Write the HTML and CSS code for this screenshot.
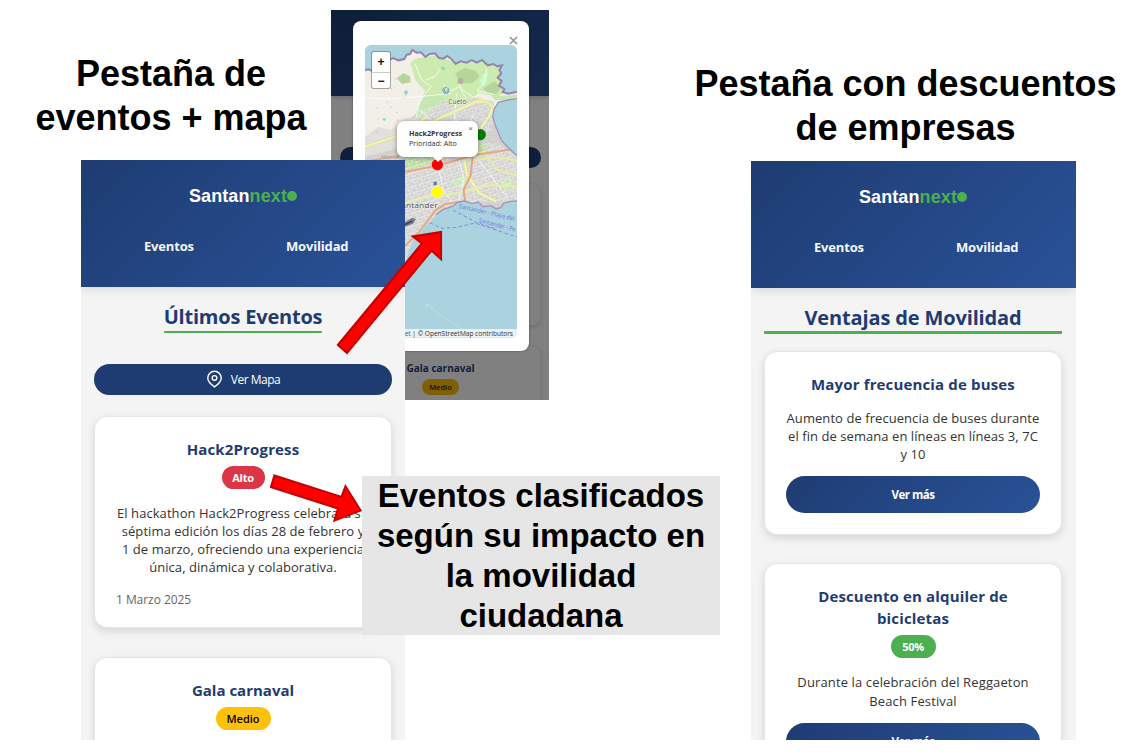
FILE: index.html
```html
<!DOCTYPE html>
<html lang="es">
<head>
<meta charset="utf-8">
<title>Santannext</title>
<link rel="stylesheet" href="styles.css">
</head>
<body>
<main class="slide">
  <h2 class="caption caption-events">Pestaña de<br>eventos + mapa</h2>
  <h2 class="caption caption-offers">Pestaña con descuentos<br>de empresas</h2>

  <section class="map-screen">
    <div class="dim-header"></div>
    <div class="dim-body">
      <div class="dim-button"></div>
      <div class="dim-card dim-card-tall"></div>
      <div class="dim-card dim-card-last">
        <h3 class="dim-title">Gala carnaval</h3>
        <span class="dim-badge">Medio</span>
      </div>
    </div>
    <div class="modal">
      <svg class="modal-close" viewBox="0 0 9 9"><path d="M1 1l7 7M8 1L1 8"/></svg>
      <svg class="map" viewBox="120 135 456 878">
        <rect x="120" y="135" width="456" height="878" fill="#aad3df"/>
        <defs>
          <clipPath id="land"><path id="coast" d="M110 211L130 208 142 213 160 196 180 185 205 174 220 181 238 177 245 164 255 162 262 150 275 158 288 157 301 171 314 162 330 160 342 174 355 176 367 168 378 176 392 191 407 184 425 188 440 180 455 188 471 180 488 196 505 192 517 199 531 196 523 210 529 220 518 233 530 243 522 257 538 267 533 276 550 281 586 273V296L548 300 520 307 508 326 503 350 512 379 521 401 530 422 544 437 560 452 586 476V603L553 605 536 610 528 623 512 626 498 617 474 620 460 606 440 611 419 603 398 607 380 620 355 628 333 643 315 665 296 680 281 701 263 725 251 750 243 782 230 815H110Z"/></clipPath>
          <pattern id="blocks" width="23" height="19" patternUnits="userSpaceOnUse" patternTransform="rotate(-17)"><path d="M0 4H23M0 13H14M5 0V19M14 4V19M20 0V12" stroke="#fff" stroke-width="2" fill="none"/><path d="M8 7h4v4h-4zM16 14h3v3h-3z" fill="#bdbbba"/></pattern>
        </defs>
        <use href="#coast" fill="#f2efe9"/>
        <g clip-path="url(#land)">
          <path d="M255 355L285 332 330 318 350 300 410 310 445 292 508 305 500 350 520 400 586 470V640L350 640 230 800H120V470L190 420Z" fill="#d3d2d1"/>
          <path d="M120 410l40-30 40 10 30-30 30-10 30 20-30 50-60 30-80 20z" fill="#e2e0dc"/>
          <path d="M265 358L285 310 300 275 340 245 370 240 402 266 380 290 350 310 315 335Z" fill="#c8e6b4"/>
          <path d="M256 190l14-14 60-10 70 24 66-4 60 14 4 46 16 32-34 10-48-8-35 22-38 20-42-35-44-8-34-40z" fill="#cdebb0"/>
          <path d="M390 220l30-17 32 10 12 16-22 20-34 2zM475 265l34-21 18 20-12 18-22 2zM215 235l20-16 20 10 2 18-26 5z" fill="#b5d69b"/>
          <path d="M463 245l14-25 12-1-5 30-10 10z" fill="#c8facc"/>
          <path d="M490 278l40 10 50-6v22l-70-4z" fill="#c8e6b4"/>
          <path d="M508 318l-5 32 14 50 28 38 34 30v-16l-20-28-26-40-14-40z" fill="#f6e3a0"/>
          <path d="M240 465l65-28 35 20-20 35-80 18zM455 430l24 2 10 22-38 8z" fill="#b9dd9c"/>
          <path d="M375 545l40-20 17 22-30 20zM520 545l35-10 15 20-32 20z" fill="#c8e6b4"/>
          <path d="M235 478l60-20 100-28 120 0 66 40v130L440 610 350 640 240 790Z" fill="url(#blocks)" opacity=".62"/>
          <path d="M285 335l45-17 20-18 60 10 35-18 65 13-10 85-80 35-145 30-48-50z" fill="url(#blocks)" opacity=".5"/>
          <g fill="none" stroke="#fff" stroke-width="2.600" opacity=".85">
            <path d="M120 293L195 297 270 291 380 280M270 190l18 48 30 22-35 47-10 48M355 255l24 18 24-13 20 35M305 240l28-12 12-22M468 275l-20 18-38-24-12-30M485 205l-5 38-24 30 52 10M283 330l38 32 55 22M395 280l-8 85"/>
            <path d="M390 350l35 84 58 74 65 86M350 400l-15 75 20 95 34 50M290 395l30 70M445 345l-50 115 22 75-15 65"/>
          </g>
          <g fill="none" stroke-linejoin="round">
            <path d="M253 414L295 382 345 354 401 329 455 304 487 306 504 320 492 350 466 385 429 434 417 475 425 522 463 579 513 604M120 440l105-35 80-55" stroke="#d3d8a1" stroke-width="10"/>
            <path d="M253 414L295 382 345 354 401 329 455 304 487 306 504 320 492 350 466 385 429 434 417 475 425 522 463 579 513 604M120 440l105-35 80-55" stroke="#f1f5b0" stroke-width="7"/>
            <path d="M455 290l40 22 22 40 20 60 40 46M430 450l50 12 34 45 64 20M340 475l55-7 42 12 80-8 62 10M240 610l70-22 86-8 100-25 80 5" stroke="#e8eda5" stroke-width="6"/>
            <path d="M120 485l115-20 95-27 100-9M240 515l90-16 115-33 136-22M443 470l-6 55-21 45 5 38M330 632l-44 60-46 46M330 632l30-20 60-8" stroke="#e8a97a" stroke-width="6"/>
            <path d="M242 440l70 2 76-15" stroke="#a8cf91" stroke-width="10"/>
          </g>
          <path d="M352 645l-30 26-37 44-30 44" stroke="#d0b5d1" stroke-width="10" fill="none"/>
          <g fill="#95d7c0"><path d="M236 276l8-7 6 8-8 10zM172 357l7-4 4 6-6 5zM346 204l7-5 9 6-7 7z"/></g>
          <path d="M352 269l9-8 11 6-3 12-10 1zM357 265l4 16 9-12" fill="none" stroke="#649fc9" stroke-width="3"/>
          <circle cx="406" cy="243" r="9" fill="#b8afa2"/>
          <path d="M148 245h3m16-24h3m28 45h3m-46 58h3m28-18h3m-31 51h3m53-20h3m-65 60h3m62-36h3m-23-40h3m10-84h3m22 58h3" stroke="#cfae98" stroke-width="3"/>
        </g>
        <path d="M120 211l10-3 12 5 18-17 20-11 25-11 15 7 18-4 7-13 10-2 7-12 13 8 13-1 13 14 13-9 16-2 12 14 13 2 12-8 11 8 14 15 15-7 18 4 15-8 15 8 16-8 17 16 17-4 12 7 14-3-8 14 6 10-11 13 12 10-8 14 16 10-5 9 17 5 36-8" fill="none" stroke="#9584ad" stroke-width="6"/>
        <path d="M576 296L548 300 520 307 508 326 503 350 512 379 521 401 530 422 544 437 560 452 576 468M576 603l-23 2-17 5-8 13-16 3-14-9-24 3-14-14-20 5-21-8-21 4-18 13-25 8-22 15" fill="none" stroke="#a593b7" stroke-width="4"/>
        <g fill="none" stroke="#848ce0" stroke-width="3" stroke-dasharray="11 7">
          <path d="M315 668L350 685 395 682 450 669 576 711M384 630l70 37 60 20"/>
        </g>
        <path d="M236 668l25-14 12 2-9 15-26 10z" fill="#777b8e"/>
        <path d="M240 674l22-11" stroke="#333c58" stroke-width="4"/>
        <path d="M303 911l13 10 60 44 39 25" fill="none" stroke="#c9dfe0" stroke-width="2"/>
        <circle cx="307" cy="916" r="4" fill="#c7dcdc"/>
        <g class="map-label">
          <text x="370" y="312" font-size="20" textLength="54" lengthAdjust="spacingAndGlyphs">Cueto</text>
          <text x="169" y="477" font-size="17" textLength="53" lengthAdjust="spacingAndGlyphs" opacity=".65">Monte</text>
          <text x="215" y="625" font-size="24" textLength="123" lengthAdjust="spacingAndGlyphs">Santander</text>
        </g>
        <g class="ferry-label">
          <text transform="translate(400 624) rotate(13)" font-size="19" textLength="172" lengthAdjust="spacingAndGlyphs">Santander - Playa del</text>
          <text transform="translate(460 666) rotate(15)" font-size="19" textLength="114" lengthAdjust="spacingAndGlyphs">Santander - Pe</text>
        </g>
        <path d="M326 545h9v11h-9z" fill="#4b78a3"/>
        <g stroke="#eee" stroke-width="2"><circle cx="466" cy="404" r="18" fill="green"/><circle cx="337" cy="494" r="18" fill="red"/><circle cx="337" cy="576" r="18" fill="#ff0"/></g>
        <rect x="180" y="987" width="396" height="26" fill="#e8f1f4"/>
        <g class="credit"><text x="239" y="1009" fill="#0078a8" textLength="18" lengthAdjust="spacingAndGlyphs">et</text><text x="262" y="1009" textLength="302" lengthAdjust="spacingAndGlyphs">| © OpenStreetMap contributors</text></g>
      </svg>
      <div class="zoom-control"><span>+</span><span>−</span></div>
      <div class="popup"><strong>Hack2Progress</strong><span>Prioridad: Alto</span><i class="popup-close">×</i></div>
    </div>
  </section>

  <section class="phone phone-events">
    <header class="header">
      <div class="logo">Santan<span>next</span><i></i></div>
      <nav class="nav"><a class="nav-events">Eventos</a><a class="nav-mobility">Movilidad</a></nav>
    </header>
    <div class="content">
      <h1 class="title title-events"><span>Últimos Eventos</span></h1>
      <div class="map-button">
        <svg viewBox="0 0 24 24"><path d="M21.500 10.500c0 6-9.500 12.500-9.500 12.500S2.500 16.500 2.500 10.500a9.500 9.500 0 0 1 19 0z"/><circle cx="12" cy="10.500" r="3.300"/></svg>
        <span>Ver Mapa</span>
      </div>
      <article class="card card-hack">
        <h3>Hack2Progress</h3>
        <span class="badge high">Alto</span>
        <p class="event-text">El hackathon Hack2Progress celebrará su<br>séptima edición los días 28 de febrero y<br>1 de marzo, ofreciendo una experiencia<br>única, dinámica y colaborativa.</p>
        <time>1 Marzo 2025</time>
      </article>
      <article class="card">
        <h3 class="gala-title">Gala carnaval</h3>
        <span class="badge medium">Medio</span>
      </article>
    </div>
  </section>

  <section class="phone phone-offers">
    <header class="header">
      <div class="logo">Santan<span>next</span><i></i></div>
      <nav class="nav"><a class="nav-events">Eventos</a><a class="nav-mobility">Movilidad</a></nav>
    </header>
    <div class="content">
      <h1 class="title title-offers"><span>Ventajas de Movilidad</span></h1>
      <article class="card card-bus">
        <h3>Mayor frecuencia de buses</h3>
        <p class="bus-text">Aumento de frecuencia de buses durante<br>el fin de semana en líneas en líneas 3, 7C<br>y 10</p>
        <div class="more">Ver más</div>
      </article>
      <article class="card">
        <h3>Descuento en alquiler de<br>bicicletas</h3>
        <span class="badge discount">50%</span>
        <p class="bike-text">Durante la celebración del Reggaeton<br>Beach Festival</p>
        <div class="more">Ver más</div>
      </article>
    </div>
  </section>

  <svg class="arrows" viewBox="0 0 1142 752">
    <path d="M338 345L347 353L431.5 250.5L441 259L441 232L413 236.500L422 243.5Z"/>
    <path d="M274.500 475.500L341.500 497L345.500 486.500L360.500 510.500L334.500 520.500L338 508.500L271 487Z"/>
  </svg>

  <div class="note">Eventos clasificados<br>según su impacto en<br>la movilidad<br>ciudadana</div>
</main>
</body>
</html>
```
FILE: styles.css
```css
* { box-sizing: border-box; }
body { margin: 0; background: #fff; font-family: "Open Sans", "Noto Sans", sans-serif; }
h1, h2, h3, p { margin: 0; }

/* Slide canvas: the objects are freely placed and overlap */
.slide { position: relative; width: 1142px; height: 752px; overflow: hidden; }
.caption { position: absolute; font: bold 36px/44px "Liberation Sans", Arial, sans-serif; text-align: center; white-space: nowrap; color: #000; }
.caption-events { left: 21px; top: 52px; width: 300px; }
.caption-offers { left: 685px; top: 62px; width: 441px; }
.note { position: absolute; left: 362px; top: 476px; width: 358px; height: 159px; background: #e6e6e6; font: bold 33px/40px "Liberation Sans", Arial, sans-serif; text-align: center; white-space: nowrap; color: #000; }
.arrows { position: absolute; left: 0; top: 0; width: 1142px; height: 752px; }
.arrows path { fill: #f00; stroke: #c80000; stroke-width: 2.2; }

/* Phone screens */
.phone { position: absolute; overflow: hidden; background: #f4f4f4; }
.phone-events { left: 81px; top: 160px; width: 324px; height: 580px; }
.phone-offers { left: 751px; top: 161px; width: 325px; height: 579px; }
.header { height: 127px; padding-top: 26px; background: linear-gradient(135deg, #1e3c72, #2a5298); box-shadow: 0 2px 10px rgba(0,0,0,.12); }
.phone-offers .logo { margin-left: -1px; }
.logo { display: flex; justify-content: center; align-items: center; height: 21px; font: bold 18px/21px "Liberation Sans", Arial, sans-serif; letter-spacing: .12px; color: #fff; }
.logo span { color: #4caf50; }
.logo i { width: 10px; height: 10px; margin-top: -1px; border-radius: 50%; background: #4caf50; }
.nav { display: flex; padding: 29px 0 0 63px; gap: 92px; font-size: 13px; line-height: 21px; font-weight: 700; letter-spacing: -.17px; color: #f4f6fa; white-space: nowrap; }
.nav a { display: block; }
.nav-events { width: 50px; }
.content { width: 324px; padding: 13px 13px 0; }
.title { height: 32px; text-align: center; font-size: 20px; line-height: 33px; font-weight: 700; letter-spacing: -.2px; color: #1e3c72; white-space: nowrap; }
.title span { display: inline-block; height: 33px; }
.title-events span { border-bottom: 2.500px solid #4caf50; border-radius: 1px; }
.title-offers { height: 33px; border-bottom: 3px solid #4caf50; border-radius: 1px; margin-bottom: 17px; letter-spacing: -.14px; }
.map-button { display: flex; align-items: center; justify-content: center; gap: 8px; height: 31px; margin: 31.500px 0 21.500px; border-radius: 16px; background: #1e3c72; color: #fff; font-size: 12px; letter-spacing: -.5px; white-space: nowrap; }
.map-button svg { width: 17px; height: 18px; fill: none; stroke: #fff; stroke-width: 2; }
.card { height: 212px; margin: 0 0 29px; padding: 21px 22px; border: 1px solid #e6e6e6; border-radius: 13px; background: #fff; text-align: center; box-shadow: 0 3px 8px rgba(0,0,0,.13); white-space: nowrap; display: flex; flex-direction: column; align-items: center; }
.card h3 { font-size: 15px; line-height: 22px; font-weight: 700; letter-spacing: .15px; color: #1e3c72; }
.card .gala-title { letter-spacing: 0; }
.card p { font-size: 13px; line-height: 18px; letter-spacing: .06px; color: #333; }
.badge { height: 23px; margin-top: 6px; padding: 0 10px; border-radius: 12px; font-size: 11px; line-height: 23px; font-weight: 600; color: #fff; flex: none; }
.high { background: #dc3545; width: 43px; font-weight: 700; letter-spacing: -.2px; }
.medium { background: #ffc107; color: #000; width: 55px; }
.discount { background: #4caf50; width: 45px; line-height: 24px; font-weight: 700; letter-spacing: -.3px; }
.event-text { margin-top: 15px; }
.card time { align-self: flex-start; margin-top: 15px; font-size: 12px; line-height: 17px; letter-spacing: -.05px; margin-left: -1px; color: #666; }
.card-bus { height: 184px; margin-bottom: 28px; }
.bus-text { margin-top: 14px; }
.more { align-self: stretch; flex: none; height: 37px; margin: 13px -1px 0; border-radius: 18.500px; background: linear-gradient(135deg, #1e3c72, #2a5298); color: #fff; font-size: 11.500px; line-height: 37px; font-weight: 700; letter-spacing: -.5px; }
.bike-text { margin-top: 15px; }
.card .bike-text { line-height: 18.500px; letter-spacing: .13px; }

/* Dimmed screen behind the map dialog */
.map-screen { position: absolute; left: 331px; top: 10px; width: 218px; height: 390px; overflow: hidden; background: #808080; }
.dim-header { height: 86px; background: linear-gradient(135deg, #0f1e39, #15294c); box-shadow: 0 1px 5px rgba(0,0,0,.2); }
.dim-body { padding: 51px 8px 0 9px; }
.dim-button { height: 21px; border-radius: 11px; background: #0f1e39; }
.dim-card { border: 1px solid #797979; border-radius: 9px; background: #808080; box-shadow: 0 2px 5px rgba(0,0,0,.12); }
.dim-card-tall { height: 143px; margin: 15px 0 19px; }
.dim-card-last { height: 80px; padding-top: 15px; display: flex; flex-direction: column; align-items: center; }
.dim-title { font-size: 10px; line-height: 15px; color: #0f1e39; white-space: nowrap; }
.dim-badge { margin-top: 3px; width: 37px; height: 16px; border-radius: 8px; background: #806003; text-align: center; font-size: 7.500px; line-height: 16px; font-weight: 600; color: #111; }
.modal { position: absolute; left: 22px; top: 11px; width: 176px; height: 330px; padding: 24px 12px 0; border-radius: 8px; background: #fefefe; box-shadow: 0 0 2px rgba(0,0,0,.5); }
.modal-close { position: absolute; right: 11px; top: 15px; width: 9px; height: 9px; stroke: #999; stroke-width: 1.700; fill: none; }
.map { display: block; width: 152px; height: 292.700px; border-radius: 6px; }
.map-label { fill: #555; stroke: #fff; stroke-width: 3px; paint-order: stroke; stroke-opacity: .6; }
.ferry-label { fill: #7079dc; }
.credit { font-size: 19px; fill: #333; }
.zoom-control { position: absolute; left: 19px; top: 31px; width: 18px; height: 36px; display: grid; grid-template-rows: 1fr 1fr; border-radius: 2px; background: #fff; box-shadow: 0 0 0 1px rgba(90,90,90,.5); text-align: center; font: bold 12px/20px "Liberation Sans", sans-serif; color: #111; }
.zoom-control span + span { border-top: 1px solid #ccc; line-height: 16px; }
.popup { position: absolute; left: 44px; top: 100px; width: 81px; height: 36px; padding: 7px 0 0 12px; border-radius: 7px; background: #fff; box-shadow: 0 1px 5px rgba(0,0,0,.45); display: flex; flex-direction: column; font-size: 7.200px; line-height: 10px; color: #333; white-space: nowrap; }
.popup::after { content: ""; position: absolute; left: 36px; top: 36px; border: 5px solid transparent; border-top-color: #fff; border-bottom: 0; }
.popup-close { position: absolute; right: 5px; top: 3px; font: 8px/9px "Liberation Sans", sans-serif; color: #666; }
```
